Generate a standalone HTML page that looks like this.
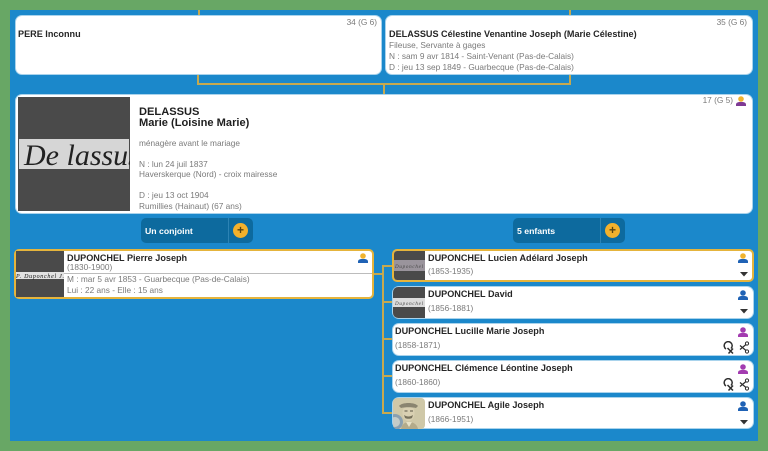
<!DOCTYPE html>
<html><head><meta charset="utf-8">
<style>
html,body{margin:0;padding:0}
body{width:768px;height:451px;position:relative;overflow:hidden;background:#68a765;font-family:"Liberation Sans",Arial,sans-serif}
div,svg,span{position:absolute}
#w{left:0;top:0;width:768px;height:451px;filter:blur(.3px)}
#panel{left:10px;top:10px;width:748px;height:431px;background:#1b88cb}
.c{background:#fff;border-radius:6px;box-shadow:0 0 0 1px #a9d3ec;box-sizing:border-box}
.g{box-shadow:none;border:2px solid #e5b43c;border-radius:5px}
.l{background:#c6a94f}
.t{white-space:nowrap;font-size:8.3px;line-height:12px;color:#7a7a7a}
.b{white-space:nowrap;font-size:9.1px;line-height:12px;font-weight:bold;color:#262626}
.btn{height:25px;width:112px;top:218px;background:#0d6a9e;border-radius:5px}
.btn i{position:absolute;left:87px;top:0;width:1px;height:25px;background:#2c83b4}
.btn b{position:absolute;left:4px;top:7px;font-size:8.7px;line-height:13px;color:#fff;white-space:nowrap}
.btn u{position:absolute;left:92px;top:5px;width:15px;height:15px;border-radius:50%;background:#f3b12c;text-decoration:none;color:#5a4310;font:bold 12px/15px "Liberation Sans",sans-serif;text-align:center}
.ph{background:#4a4a4a;overflow:hidden}
</style></head><body>
<div id="w">
<div id="panel"></div>

<div class="l" style="left:198px;top:10px;width:2px;height:6px"></div>
<div class="l" style="left:569px;top:10px;width:2px;height:6px"></div>
<div class="l" style="left:197px;top:74px;width:2px;height:11px"></div>
<div class="l" style="left:569px;top:74px;width:2px;height:11px"></div>
<div class="l" style="left:197px;top:83px;width:374px;height:2px"></div>
<div class="l" style="left:383px;top:84px;width:2px;height:10px"></div>

<div class="c" style="left:16px;top:16px;width:365px;height:58px"></div>
<div class="t" style="right:391px;top:16px">34 (G 6)</div>
<div class="b" style="left:18px;top:28px">PERE Inconnu</div>

<div class="c" style="left:386px;top:16px;width:366px;height:58px"></div>
<div class="t" style="right:21px;top:16px">35 (G 6)</div>
<div class="b" style="left:389px;top:28px">DELASSUS Célestine Venantine Joseph (Marie Célestine)</div>
<div class="t" style="left:389px;top:39px">Fileuse, Servante à gages</div>
<div class="t" style="left:389px;top:50px">N : sam 9 avr 1814 - Saint-Venant (Pas-de-Calais)</div>
<div class="t" style="left:389px;top:61px">D : jeu 13 sep 1849 - Guarbecque (Pas-de-Calais)</div>

<div class="c" style="left:16px;top:95px;width:736px;height:118px"></div>
<div class="ph" style="left:18px;top:97px;width:112px;height:114px">
<div style="left:1px;top:42px;width:110px;height:30px;background:#d6d6d6"></div>
<svg width="112" height="114" style="left:0;top:0"><text x="6" y="68" font-family="Liberation Serif" font-style="italic" font-size="30" fill="#222">De lassus</text></svg>
</div>
<div class="b" style="left:139px;top:107px;font-size:11.1px;line-height:11px;color:#1e1e1e">DELASSUS<br>Marie (Loisine Marie)</div>
<div class="t" style="left:139px;top:137px">ménagère avant le mariage</div>
<div class="t" style="left:139px;top:158px">N : lun 24 juil 1837</div>
<div class="t" style="left:139px;top:168px">Haverskerque (Nord) - croix mairesse</div>
<div class="t" style="left:139px;top:189px">D : jeu 13 oct 1904</div>
<div class="t" style="left:139px;top:200px">Rumillies (Hainaut) (67 ans)</div>
<div class="t" style="right:35px;top:94px">17 (G 5)</div>
<svg style="left:736px;top:96px" width="10" height="10" viewBox="0 0 10 10"><path d="M0 10V8.500Q0 6.500 3 6H7Q10 6.500 10 8.500V10z" fill="#7e3a94"/><circle cx="5" cy="3" r="2.800" fill="#f0b32e"/></svg>

<div class="btn" style="left:141px"><b>Un conjoint</b><i></i><u>+</u></div>
<div class="btn" style="left:513px"><b>5 enfants</b><i></i><u>+</u></div>

<div class="c g" style="left:14px;top:249px;width:360px;height:50px"></div>
<div class="ph" style="left:16px;top:251px;width:48px;height:46px">
<div style="left:0;top:21px;width:48px;height:7px;background:#e2e2e2"></div>
<svg width="48" height="46" style="left:0;top:0"><text x="0" y="27" font-family="Liberation Serif" font-style="italic" font-size="6" fill="#111" textLength="48">P. Duponchel J.</text></svg>
</div>
<div style="left:64px;top:273px;width:308px;height:1px;background:#bcbcbc"></div>
<div class="b" style="left:67px;top:252px">DUPONCHEL Pierre Joseph</div>
<div class="t" style="left:67px;top:261px">(1830-1900)</div>
<div class="t" style="left:67px;top:273px">M : mar 5 avr 1853 - Guarbecque (Pas-de-Calais)</div>
<div class="t" style="left:67px;top:284px">Lui : 22 ans - Elle : 15 ans</div>
<svg style="left:358px;top:253px" width="10" height="10" viewBox="0 0 10 10"><path d="M0 10V8.500Q0 6.500 3 6H7Q10 6.500 10 8.500V10z" fill="#1f62b5"/><circle cx="5" cy="3" r="2.800" fill="#f0b32e"/></svg>

<div class="l" style="left:374px;top:273px;width:9px;height:2px"></div>
<div class="l" style="left:382px;top:265px;width:2px;height:149px"></div>
<div class="l" style="left:383px;top:265px;width:9px;height:2px"></div>
<div class="l" style="left:383px;top:301px;width:9px;height:2px"></div>
<div class="l" style="left:383px;top:338px;width:9px;height:2px"></div>
<div class="l" style="left:383px;top:375px;width:9px;height:2px"></div>
<div class="l" style="left:383px;top:412px;width:9px;height:2px"></div>

<div class="c g" style="left:392px;top:249px;width:362px;height:33px"></div>
<div class="c" style="left:393px;top:287px;width:360px;height:31px"></div>
<div class="c" style="left:393px;top:324px;width:360px;height:31px"></div>
<div class="c" style="left:393px;top:361px;width:360px;height:31px"></div>
<div class="c" style="left:393px;top:398px;width:360px;height:30px"></div>

<div class="ph" style="left:394px;top:251px;width:31px;height:29px;border-radius:3px 0 0 3px">
<div style="left:0;top:9px;width:31px;height:11px;background:#9a949c"></div>
<svg width="31" height="29" style="left:0;top:0"><text x="1" y="17" font-family="Liberation Serif" font-style="italic" font-size="5" fill="#444" textLength="28">Duponchel</text></svg>
</div>
<div class="ph" style="left:393px;top:287px;width:32px;height:31px;border-radius:5px 0 0 5px">
<div style="left:0;top:11px;width:32px;height:9px;background:#dcdcdc"></div>
<svg width="32" height="31" style="left:0;top:0"><text x="2" y="18" font-family="Liberation Serif" font-style="italic" font-size="5" fill="#444" textLength="28">Duponchel</text></svg>
</div>
<svg style="left:393px;top:398px" width="32" height="31" viewBox="0 0 32 31">
<defs><clipPath id="r"><rect width="32" height="31" rx="4"/></clipPath></defs>
<g clip-path="url(#r)">
<rect width="32" height="31" fill="#cfc8a8"/>
<circle cx="2" cy="24" r="8" fill="#8aa0b0"/>
<circle cx="2" cy="24" r="5" fill="#c4ccc8"/>
<path d="M8 31c1-5 4-7 8-7s8 2 9 7z" fill="#b3ab8b"/>
<path d="M13 24l3 5 3-5z" fill="#e8e2c8"/>
<ellipse cx="15.500" cy="15" rx="6" ry="8" fill="#d9d0b2"/>
<path d="M6 8c3-4 16-4 19 0l-2 2c-4-1-11-1-15 0z" fill="#8a8570"/>
<path d="M11 17c3 2 6 2 9 0l-1 3c-2 1-5 1-7 0z" fill="#77725c"/>
<path d="M11.500 13h3M17 13h3" stroke="#5a5645" stroke-width="1"/>
</g>
</svg>

<div class="b" style="left:428px;top:252px">DUPONCHEL Lucien Adélard Joseph</div>
<div class="t" style="left:428px;top:265px">(1853-1935)</div>
<div class="b" style="left:428px;top:288px">DUPONCHEL David</div>
<div class="t" style="left:428px;top:302px">(1856-1881)</div>
<div class="b" style="left:395px;top:325px">DUPONCHEL Lucille Marie Joseph</div>
<div class="t" style="left:395px;top:339px">(1858-1871)</div>
<div class="b" style="left:395px;top:362px">DUPONCHEL Clémence Léontine Joseph</div>
<div class="t" style="left:395px;top:376px">(1860-1860)</div>
<div class="b" style="left:428px;top:399px">DUPONCHEL Agile Joseph</div>
<div class="t" style="left:428px;top:413px">(1866-1951)</div>

<svg style="left:738px;top:253px" width="10" height="10" viewBox="0 0 10 10"><path d="M0 10V8.500Q0 6.500 3 6H7Q10 6.500 10 8.500V10z" fill="#1f62b5"/><circle cx="5" cy="3" r="2.800" fill="#f0b32e"/></svg>
<svg style="left:738px;top:290px" width="10" height="10" viewBox="0 0 10 10"><path d="M0 10V8.500Q0 6.500 3 6H7Q10 6.500 10 8.500V10z" fill="#1f62b5"/><circle cx="5" cy="3" r="2.800" fill="#1f62b5"/></svg>
<svg style="left:738px;top:327px" width="10" height="10" viewBox="0 0 10 10"><path d="M0 10V8.500Q0 6.500 3 6H7Q10 6.500 10 8.500V10z" fill="#a33cb0"/><circle cx="5" cy="3" r="2.800" fill="#a33cb0"/></svg>
<svg style="left:738px;top:364px" width="10" height="10" viewBox="0 0 10 10"><path d="M0 10V8.500Q0 6.500 3 6H7Q10 6.500 10 8.500V10z" fill="#a33cb0"/><circle cx="5" cy="3" r="2.800" fill="#a33cb0"/></svg>
<svg style="left:738px;top:401px" width="10" height="10" viewBox="0 0 10 10"><path d="M0 10V8.500Q0 6.500 3 6H7Q10 6.500 10 8.500V10z" fill="#1f62b5"/><circle cx="5" cy="3" r="2.800" fill="#1f62b5"/></svg>

<svg style="left:740px;top:272px" width="8" height="5"><path d="M0 0h8L4 4.500z" fill="#333"/></svg>
<svg style="left:740px;top:309px" width="8" height="5"><path d="M0 0h8L4 4.500z" fill="#333"/></svg>
<svg style="left:740px;top:420px" width="8" height="5"><path d="M0 0h8L4 4.500z" fill="#333"/></svg>

<svg style="left:723px;top:341px" width="28" height="14" viewBox="0 0 28 14" fill="none" stroke="#2e2e2e">
<path d="M8 7.500A4 4 0 1 0 3 8" stroke-width="1.500"/><path d="M4.500 7l5.500 5.500M10 7.500L5.500 12.500" stroke-width="1.500"/>
<circle cx="24" cy="2.500" r="1.600"/><circle cx="24" cy="10.500" r="1.600"/><path d="M23 3.500L17 8.500M23 9.500L17 4.500" stroke-width="1.200"/>
</svg>
<svg style="left:723px;top:378px" width="28" height="14" viewBox="0 0 28 14" fill="none" stroke="#2e2e2e">
<path d="M8 7.500A4 4 0 1 0 3 8" stroke-width="1.500"/><path d="M4.500 7l5.500 5.500M10 7.500L5.500 12.500" stroke-width="1.500"/>
<circle cx="24" cy="2.500" r="1.600"/><circle cx="24" cy="10.500" r="1.600"/><path d="M23 3.500L17 8.500M23 9.500L17 4.500" stroke-width="1.200"/>
</svg>
</div>
</body></html>
